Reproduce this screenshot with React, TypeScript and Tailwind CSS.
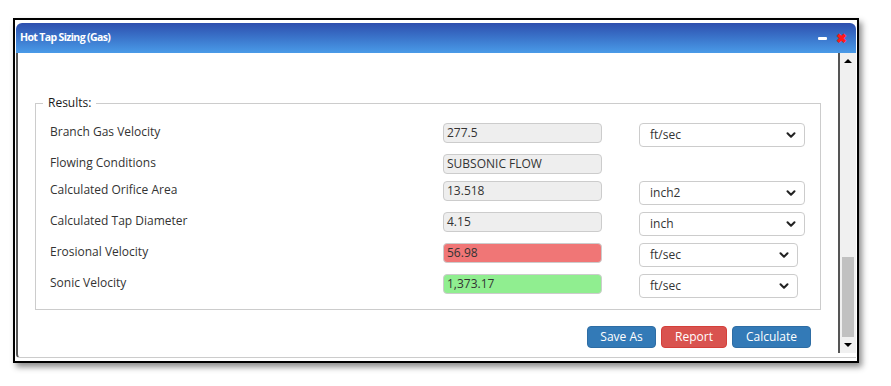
import { ChevronDown } from "lucide-react";

const rows: {
  label: string;
  value: string;
  bg: string;
  unit?: string;
  selectW?: string;
}[] = [
  { label: "Branch Gas Velocity", value: "277.5", bg: "bg-[#eeeeee]", unit: "ft/sec", selectW: "w-[166px]" },
  { label: "Flowing Conditions", value: "SUBSONIC FLOW", bg: "bg-[#eeeeee]" },
  { label: "Calculated Orifice Area", value: "13.518", bg: "bg-[#eeeeee]", unit: "inch2", selectW: "w-[166px]" },
  { label: "Calculated Tap Diameter", value: "4.15", bg: "bg-[#eeeeee]", unit: "inch", selectW: "w-[166px]" },
  { label: "Erosional Velocity", value: "56.98", bg: "bg-[#f07676]", unit: "ft/sec", selectW: "w-[159px]" },
  { label: "Sonic Velocity", value: "1,373.17", bg: "bg-[#90ee90]", unit: "ft/sec", selectW: "w-[159px]" },
];

const Select = ({ unit, width }: { unit: string; width: string }) => (
  <div
    className={`${width} h-[24px] ml-[37px] flex items-center justify-between pl-[10px] pr-[6px] bg-white border border-[#cccccc] rounded-[4px] text-[12px] text-[#333333]`}
  >
    <span>{unit}</span>
    <ChevronDown size={14} strokeWidth={3.5} className="text-[#222222]" />
  </div>
);

const App = () => {
  return (
    <div className="w-[891px] h-[386px] bg-white pt-[18px] pl-[13px] font-['Open_Sans',sans-serif]">
      {/* Window */}
      <div className="w-[846px] h-[345px] border-2 border-black bg-white p-[1px] flex flex-col shadow-[3px_4px_6px_rgba(0,0,0,0.45)]">
        {/* Title bar */}
        <div className="h-[30px] mt-[2px] rounded-t-[6px] bg-gradient-to-b from-[#2e4fae] to-[#4a9be8] flex items-center justify-between pl-[4px] pr-[9px]">
          <span className="text-white text-[10.5px] font-bold tracking-[-0.06em]">
            Hot Tap Sizing (Gas)
          </span>
          <div className="flex items-center gap-[9px]">
            <div className="w-[9px] h-[3px] bg-white rounded-[1px]" />
            <span className="text-[#ff1a1a] text-[13px] font-bold leading-none">✖</span>
          </div>
        </div>

        {/* Body */}
        <div className="flex-1 flex border-l-2 border-[#555555] border-b border-b-[#cccccc] rounded-bl-[4px] mb-[2px]">
          <div className="flex-1 flex flex-col pl-[17px] pr-[17px]">
            <fieldset className="mt-[41px] border border-[#cccccc] pl-[14px] pr-[14px] pb-[11px] pt-[11px] text-[#333333]">
              <legend className="-ml-[7px] px-[5px] text-[12px] font-medium text-[#1a1a1a]">
                Results:
              </legend>
              <div className="flex flex-col gap-[7px]">
                {rows.map((r) => (
                  <div key={r.label} className="flex items-start">
                    <div className="w-[393px] text-[12px] leading-[16px] pt-[1px]">{r.label}</div>
                    <div
                      className={`w-[159px] h-[20px] ${r.bg} border border-[#cccccc] rounded-[4px] pl-[3px] text-[12px] leading-[18px] text-[#333333]`}
                    >
                      {r.value}
                    </div>
                    {r.unit && r.selectW && <Select unit={r.unit} width={r.selectW} />}
                  </div>
                ))}
              </div>
            </fieldset>

            <div className="flex justify-end gap-[5px] mt-[16px] pr-[10px]">
              <button className="w-[69px] h-[22px] bg-[#337ab7] border border-[#2e6da4] rounded-[4px] text-white text-[12px]">
                Save As
              </button>
              <button className="w-[66px] h-[22px] bg-[#d9534f] border border-[#d43f3a] rounded-[4px] text-white text-[12px]">
                Report
              </button>
              <button className="w-[79px] h-[22px] bg-[#337ab7] border border-[#2e6da4] rounded-[4px] text-white text-[12px]">
                Calculate
              </button>
            </div>
          </div>

          {/* Scrollbar */}
          <div className="w-[18px] bg-[#f0f0f0] border-l-2 border-[#555555] flex flex-col items-center py-[6px] mb-[4px]">
            <div className="w-0 h-0 border-l-[4px] border-r-[4px] border-b-[4px] border-l-transparent border-r-transparent border-b-black" />
            <div className="flex-1" />
            <div className="w-[12px] h-[80px] bg-[#c1c1c1] mb-[6px]" />
            <div className="w-0 h-0 border-l-[4px] border-r-[4px] border-t-[4px] border-l-transparent border-r-transparent border-t-black" />
          </div>
        </div>
      </div>
    </div>
  );
};

export default App;
